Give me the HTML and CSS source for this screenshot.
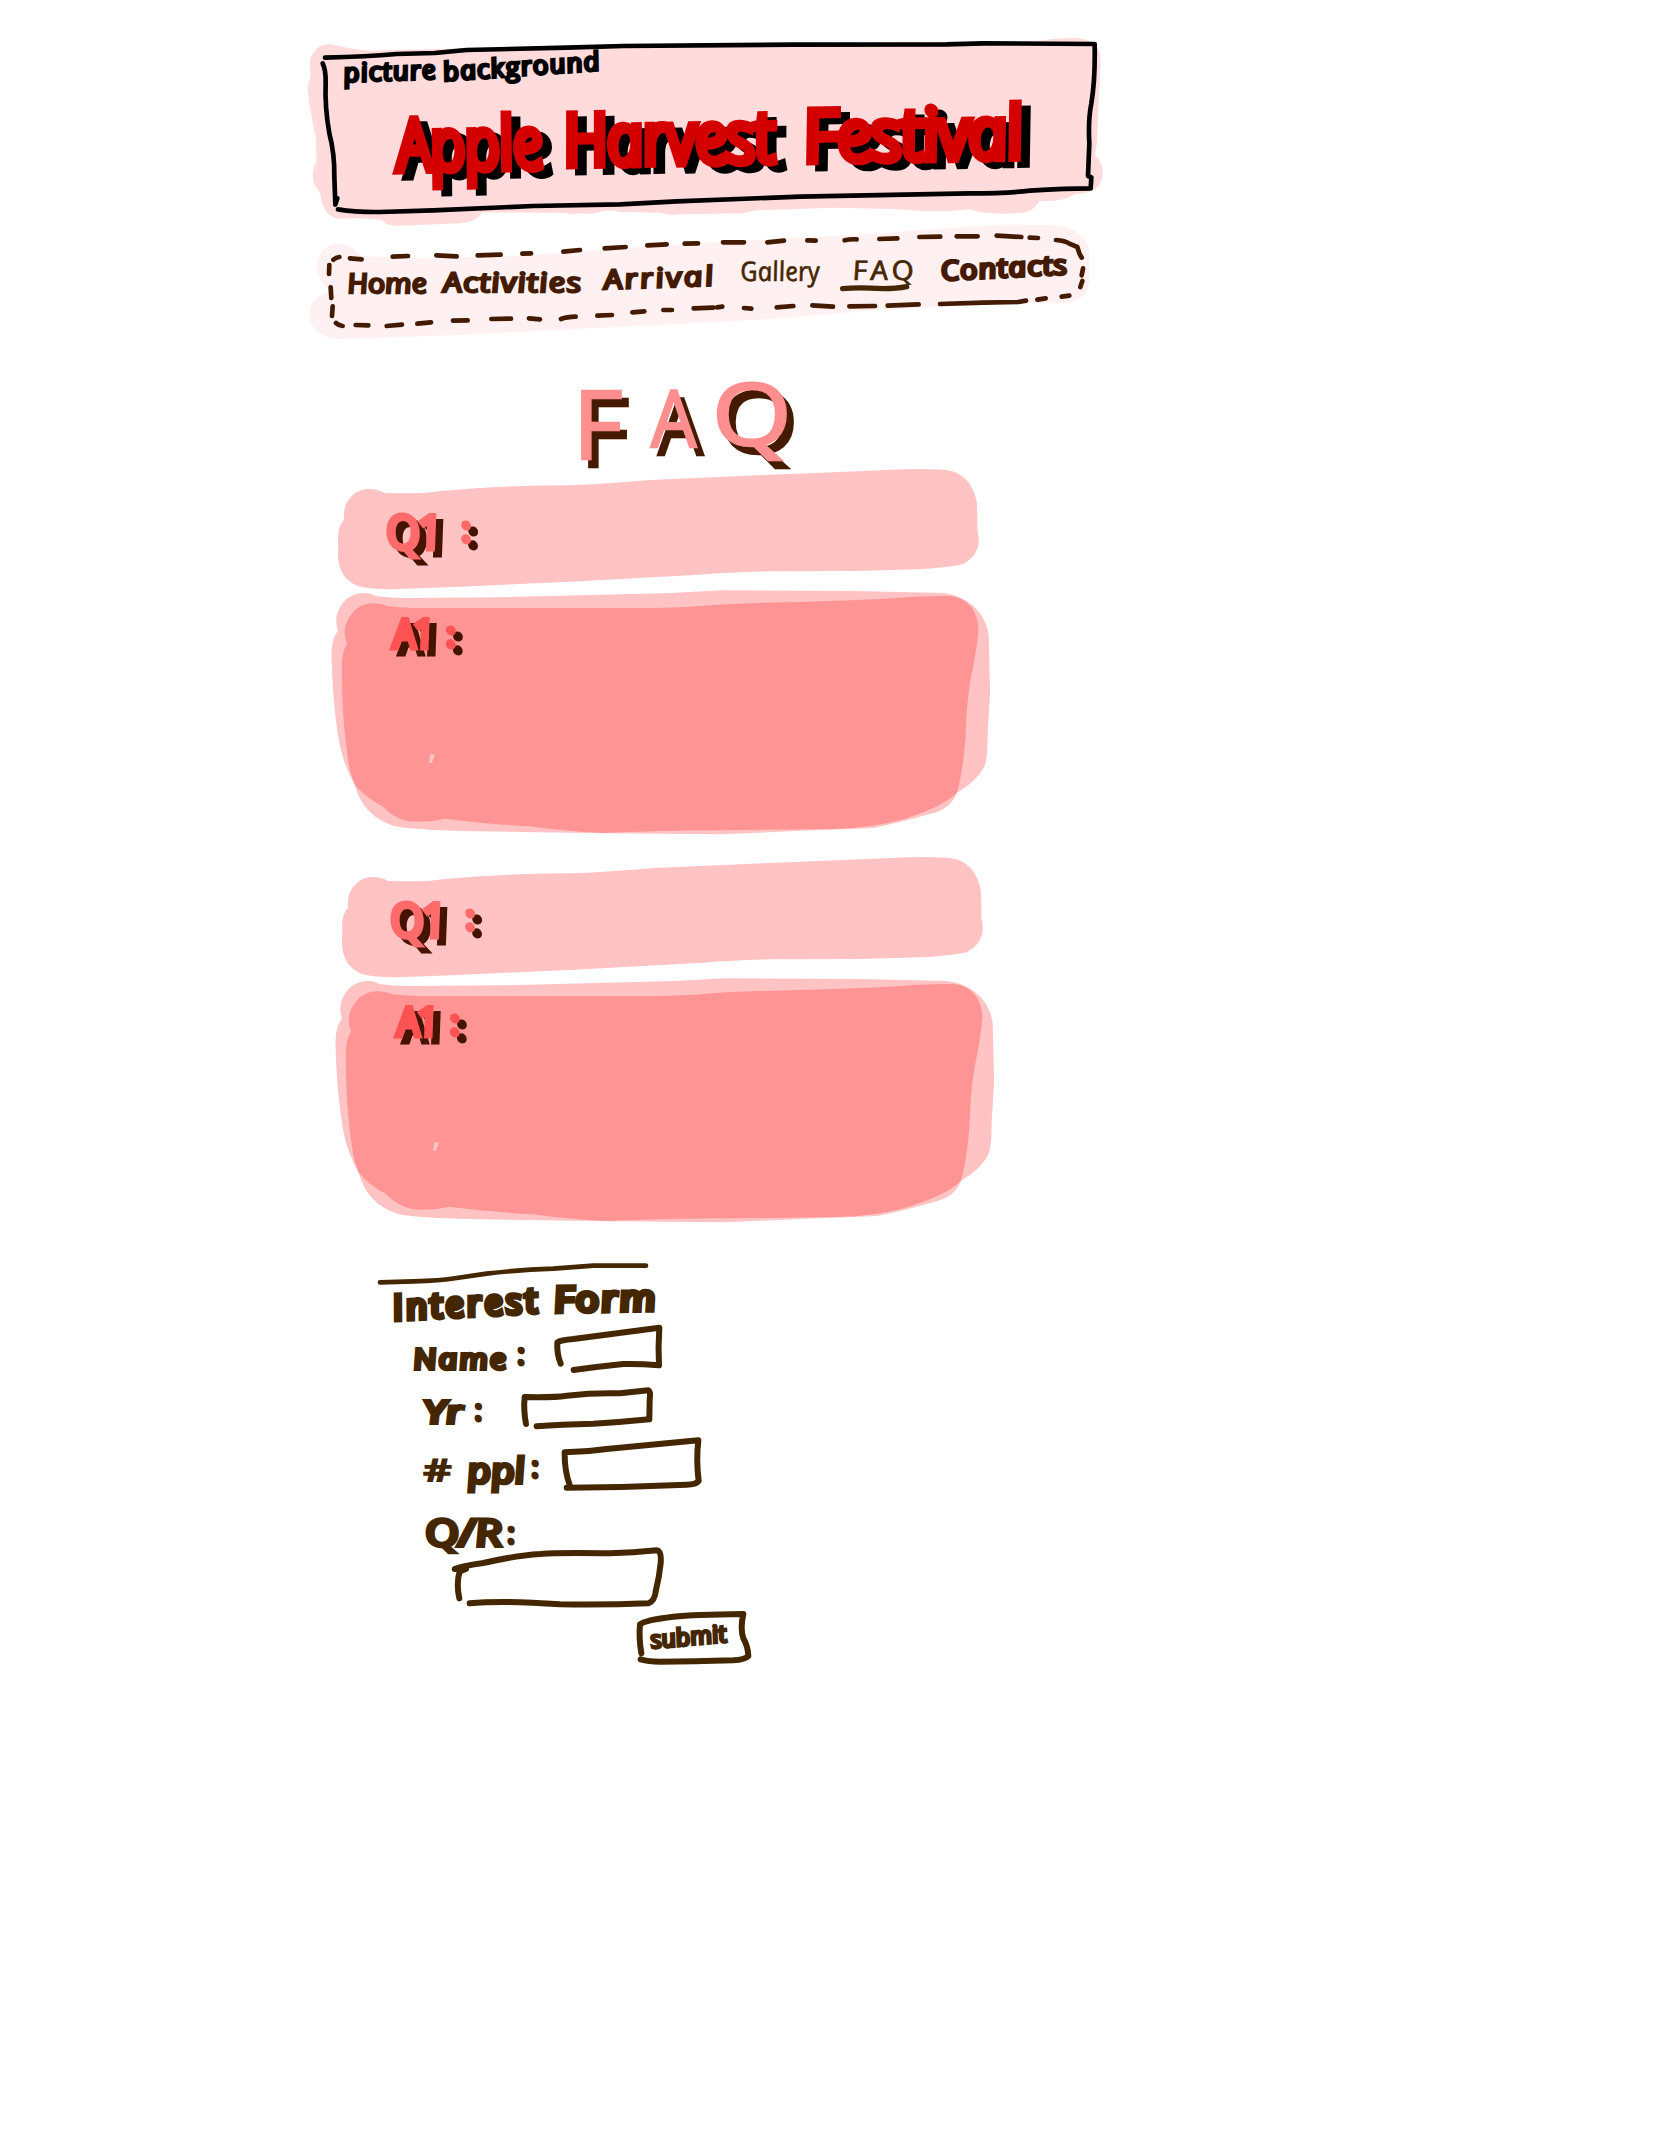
FILE: index.html
```html
<!DOCTYPE html>
<html lang="en">
<head>
<meta charset="utf-8">
<title>Apple Harvest Festival - FAQ</title>
<link rel="stylesheet" href="styles.css">
</head>
<body>
<header class="banner">
  <svg class="ink" viewBox="0 0 2520 585" aria-hidden="true">
    <path class="wash-banner" d="M90 72C50 72 25 105 30 150C38 170 22 185 23 210C28 260 36 290 40 320C50 345 48 370 50 425C38 440 35 470 42 490C50 510 62 510 64 540C72 575 95 600 130 596Q190 592 245 600C260 614 275 618 300 617L480 610C515 605 535 600 545 577L790 578Q820 584 850 580Q880 585 905 574Q935 568 960 576L1080 578Q1110 588 1140 583L1330 580Q1360 570 1400 570L1600 563L1800 568Q1900 580 2010 568C2040 582 2110 582 2150 580C2190 580 2210 560 2218 543C2260 545 2300 540 2325 522Q2370 520 2395 500C2415 470 2412 430 2385 405C2392 370 2392 340 2394 290L2402 120C2405 85 2370 52 2320 54Q2250 55 2210 64L1200 72L500 85L210 92Q150 88 90 72Z"/>
    <g class="banner-line">
      <path d="M75 113Q200 110 290 102L405 99Q450 94 500 90L800 83L970 78L1480 74L1940 73L2050 70L2384 72Q2386 180 2374 250Q2364 300 2368 370L2364 468L2374 472L2372 505Q2300 505 2190 512Q2120 520 2010 520L1500 530L1130 544L960 553L700 558L400 571L240 576Q170 577 114 568"/>
      <path d="M68 130Q78 150 77 190Q74 260 88 340Q104 400 103 470L106 554L112 535"/>
    </g>
  </svg>
  <p class="caption"><span class="hand cap-a">picture</span><span class="hand cap-b">background</span></p>
  <h1 class="title"><span class="hand t-apple">Apple</span><span class="hand t-harvest">Harvest</span><span class="hand t-festival">Festival</span></h1>
</header>

<nav class="menu">
  <svg class="ink" viewBox="0 585 2520 390" aria-hidden="true">
    <path class="wash-menu" d="M115 671C75 672 48 705 52 745C55 780 75 805 100 818C60 815 27 845 29 885C30 930 70 960 130 957L480 945L1200 908L1400 898L1700 873L1900 862L2100 850L2300 850C2345 845 2370 815 2368 770L2368 700C2365 650 2320 615 2250 615L2100 614Q2000 622 1900 627L1700 643L1420 658L1200 668L900 690L660 708L300 715L183 708Q160 673 115 671Z"/>
    <path class="dashes" d="M88 735L87 762M92 802L94 834M98 859L96 888M108 909Q116 917 128 918M100 719Q108 712 118 711M150 715L185 718M278 710L324 708M409 706L470 709M533 706L602 704M667 701L693 700M790 695L840 690M914 685L977 681M1042 676L1100 673M1154 671L1194 670M1269 667L1332 667M1402 667L1452 662M1522 661L1547 662M1634 661Q1650 657 1670 658M1738 657L1792 655M1858 651L1921 650M1970 649L2033 649M2090 647L2164 651M2189 653L2214 654M2268 660Q2295 662 2308 671L2332 681L2338 700L2345 713M2349 745L2345 766M2347 783L2341 801M2308 827L2285 830M2237 835L2212 839M2178 842L2155 846L2050 848L1920 852M1856 853L1763 857M1725 858L1648 859M1599 860L1537 856M1480 858L1430 862M1354 866L1332 864M1267 860L1251 862M1181 865L1240 863M1116 870L1090 870M1033 874L997 877M936 885L892 887M827 890Q800 891 783 897M720 898L687 895M633 896L574 897M503 901L459 902M393 907L352 911M306 914L260 918M205 916L167 915"/>
    <path class="underline" d="M1628 806Q1670 801 1750 806Q1790 806 1820 800"/>
  </svg>
  <a class="hand n-home">Home</a>
  <a class="hand n-act">Activities</a>
  <a class="hand n-arr">Arrival</a>
  <a class="hand thin n-gal">Gallery</a>
  <a class="hand thin n-faq">FAQ</a>
  <a class="hand n-con">Contacts</a>
</nav>

<main>
  <h2 class="heading"><span class="h-f">F</span><span class="h-a">A</span><span class="h-q">Q</span></h2>

  <section class="entry">
    <svg class="ink" viewBox="0 300 1568 1164" preserveAspectRatio="none" aria-hidden="true">
      <defs><g id="washes">
        <path class="wash-q" d="M142 398C120 380 85 384 70 410C55 430 52 455 54 480C42 495 39 520 41 560C37 620 50 660 85 678Q120 690 180 687L300 681L560 665L850 644Q920 636 1000 634L1200 633L1340 628Q1400 624 1440 613C1465 595 1479 565 1475 530C1470 500 1474 470 1471 425C1463 365 1435 332 1395 329Q1340 325 1270 330L1000 345L740 360Q640 372 560 376Q450 376 350 385Q290 390 240 398Q190 402 142 398Z"/>
        <path class="wash-q" d="M125 708C100 690 65 700 48 735C35 760 34 785 40 812C28 835 25 860 26 900Q30 1060 45 1160Q55 1220 78 1275C90 1335 120 1385 180 1402Q240 1412 350 1414L640 1420L900 1423L1080 1412L1240 1404Q1310 1385 1380 1357Q1415 1340 1427 1298Q1470 1265 1488 1220C1497 1190 1494 1160 1496 1110L1501 1000L1498 830C1495 770 1460 710 1395 699L1200 693L900 691Q800 700 700 702L400 712L190 714Q150 713 125 708Z"/>
        <path class="wash-a" fill-rule="evenodd" d="M150 738C130 725 95 725 75 755C55 785 50 820 61 850C48 880 49 900 49 960Q50 1080 62 1190Q68 1250 80 1278Q105 1315 138 1337Q165 1375 200 1384Q240 1389 280 1376Q380 1393 470 1399Q550 1415 640 1419Q750 1412 900 1411L1150 1407Q1230 1405 1300 1380Q1390 1345 1426 1300Q1440 1240 1446 1130Q1449 1010 1460 940Q1472 860 1475 810C1475 755 1450 712 1410 708Q1350 707 1300 713Q1200 722 1000 728Q900 732 830 740Q780 744 700 744L210 744Q180 743 150 738ZM247 1182L258 1184L250 1209L244 1208Z"/>
      </g></defs>
      <use href="#washes"/>
    </svg>
    <h3 class="question"><span class="hand q-mark">Q1</span><span class="hand q-colon">:</span></h3>
    <p class="answer"><span class="hand a-mark">A1</span><span class="hand a-colon">:</span></p>
  </section>

  <section class="entry entry-second">
    <svg class="ink" viewBox="0 300 1568 1164" preserveAspectRatio="none" aria-hidden="true"><use href="#washes"/></svg>
    <h3 class="question"><span class="hand q-mark">Q1</span><span class="hand q-colon">:</span></h3>
    <p class="answer"><span class="hand a-mark">A1</span><span class="hand a-colon">:</span></p>
  </section>

  <form class="interest">
    <svg class="rule" viewBox="0 0 1260 132" aria-hidden="true"><path d="M60 127L160 124Q240 122 290 114L380 101Q480 89 580 86L700 77L858 77"/></svg>
    <h3 class="form-title"><span class="hand f-int">Interest</span><span class="hand f-form">Form</span></h3>
    <label class="row r-name">
      <svg class="ink box" viewBox="0 252 1260 168" aria-hidden="true"><path d="M602 371Q590 340 592 307Q602 300 640 297L898 263Q894 320 897 376Q840 371 790 372Q720 379 641 390"/></svg>
      <span class="hand l-name">Name</span><span class="hand dots">:</span>
    </label>
    <label class="row r-yr">
      <svg class="ink box" viewBox="0 420 1260 162" aria-hidden="true"><path d="M498 552Q490 510 494 471Q580 473 620 467Q700 458 780 460L865 451Q873 454 869 480L868 538Q780 547 700 551Q600 553 530 559"/></svg>
      <span class="hand l-yr">Yr</span><span class="hand dots">:</span>
    </label>
    <label class="row r-ppl">
      <svg class="ink box" viewBox="0 582 1260 198" aria-hidden="true"><path d="M629 735Q613 690 614 637Q680 636 740 627L1015 601Q1008 660 1016 723Q1008 734 980 734Q800 742 620 743"/></svg>
      <span class="hand l-num">#</span><span class="hand l-ppl">ppl</span><span class="hand dots">:</span>
    </label>
    <label class="row r-qr">
      <span class="hand l-qr">Q/R</span><span class="hand dots">:</span>
    </label>
    <svg class="box area" viewBox="0 918 1260 192" aria-hidden="true"><path d="M298 1075Q288 1030 299 994L318 987L284 987Q310 977 370 969Q470 946 540 942Q600 937 750 940Q820 938 890 931Q905 933 902 970Q898 1010 888 1050Q884 1085 865 1090Q740 1095 600 1093Q430 1080 329 1090"/></svg>
    <div class="row r-submit">
      <svg class="ink box" viewBox="0 1110 1260 180" aria-hidden="true"><path d="M844 1240Q836 1195 840 1153Q855 1140 940 1130Q1000 1124 1150 1122Q1140 1165 1150 1195Q1164 1220 1165 1248Q1155 1259 1120 1261Q1000 1265 900 1265Q865 1265 842 1258"/></svg>
      <span class="hand l-submit">submit</span>
    </div>
  </form>
</main>
</body>
</html>
```

FILE: styles.css
```css
* { box-sizing: border-box; }

body {
  margin: 0;
  padding-top: 20px;
  min-height: 2154px;
  background: #fff;
  font-family: "Open Sans", "Noto Sans", sans-serif;
}

h1, h2, h3, p { margin: 0; font-weight: 400; }

/* Pen drawing that lies beneath the words of a block */
.ink {
  position: absolute;
  inset: 0;
  width: 100%;
  height: 100%;
  overflow: visible;
  z-index: -1;
}

.ink path, .rule path, .box path { stroke-linecap: round; stroke-linejoin: round; }

/* Upright italic: keeps the single-storey handwritten "a" */
.hand {
  display: block;
  flex: none;
  font-style: italic;
  line-height: 1;
  white-space: nowrap;
  transform-origin: 0 88%;
  transform: rotate(var(--tilt, 0deg)) skewX(10deg) scaleX(var(--sx, 1));
  -webkit-text-stroke: var(--pen, 2.4px) currentColor;
  stroke-linejoin: round;
}

/* Banner */
.banner { position: relative; width: 840px; height: 195px; margin-left: 300px; }
.wash-banner { fill: #ffdbdb; }
.banner-line { fill: none; stroke: #000; stroke-width: 14; }
.caption { display: flex; height: 65px; padding-left: 45px; font-size: 26px; color: #000; }
.caption .hand { --pen: 2.8px; }
.cap-a { --tilt: -2deg; --sx: 1.07; width: 100px; margin-top: 39px; letter-spacing: 1px; }
.cap-b { --tilt: -4deg; --sx: 1.07; margin-top: 38px; letter-spacing: 1px; }
.title {
  display: flex;
  padding-left: 101px;
  font-size: 70px;
  font-weight: 300;
  color: #d40000;
  filter: drop-shadow(9px 6px 0 #000);
}
.title .hand { --pen: 9px; --tilt: -1deg; }
.title .t-apple { width: 167px; margin-top: 23px; --sx: .86; }
.title .t-harvest { width: 241px; margin-top: 18px; --sx: .92; }
.title .t-festival { margin-top: 14px; --sx: .99; }

/* Menu */
.menu { position: relative; display: flex; width: 840px; height: 130px; margin-left: 300px; padding-left: 56px; font-size: 27px; color: #441a00; }
.wash-menu { fill: #fff1f1; }
.dashes { fill: none; stroke: #441a00; stroke-width: 14; }
.underline { fill: none; stroke: #442600; stroke-width: 16; }
.n-home { --sx: 1.13; width: 96px; margin-top: 54px; }
.n-act { --sx: 1.23; width: 163px; margin-top: 53px; letter-spacing: 1px; }
.n-arr { --tilt: -2deg; --sx: 1.22; width: 136px; margin-top: 50px; letter-spacing: 2px; }
.thin { --pen: .6px; color: #442600; }
.n-gal { --sx: .95; width: 112px; margin-top: 42px; }
.n-faq { --sx: 1.15; width: 92px; margin-top: 41px; letter-spacing: 3px; }
.n-con { --tilt: -3deg; --sx: 1.14; --pen: 3px; margin-top: 41px; letter-spacing: 1px; }

/* Page heading */
.heading {
  display: flex;
  height: 115px;
  padding-left: 573px;
  line-height: 1;
  color: #ff8f8f;
  -webkit-text-stroke: 2.5px currentColor;
  filter: drop-shadow(7px 8px 0 #441a00);
}
.heading span { display: block; flex: none; }
.h-f { width: 78px; margin-top: 29px; font-size: 96px; }
.h-a { width: 61px; margin-top: 33px; font-size: 78px; transform: scaleX(.92); transform-origin: 0 0; }
.h-q { margin-top: 24px; font-size: 86px; transform: scaleX(1.19); transform-origin: 0 0; }

/* Questions and answers */
.entry { position: relative; width: 700px; height: 388px; margin-left: 320px; font-size: 40px; }
.entry-second { margin-left: 324px; }
.wash-q { fill: #ffc3c3; }
.wash-a { fill: #ff9494; }
.question, .answer { display: flex; }
.question { height: 151px; padding: 48px 0 0 77px; color: #ff6b6b; filter: drop-shadow(7px 6px 0 #441400); }
.answer { padding: 2px 0 0 75px; color: #ff5252; filter: drop-shadow(7px 6px 0 #441400); }
.entry .hand { --pen: 5px; }
.q-mark { width: 77px; letter-spacing: -3px; }
.a-mark { width: 54px; letter-spacing: -3px; }
.entry .q-colon, .entry .a-colon { font-size: 32px; margin-top: 5px; }
.entry .q-colon { --pen: 6px; }
.entry .a-colon { --pen: 6px; }

/* Interest form */
.interest { width: 420px; margin: 4px 0 0 360px; color: #442600; }
.rule, .area { display: block; width: 420px; overflow: visible; }
.rule { height: 44px; }
.area { height: 64px; }
.rule path, .box path { fill: none; stroke: #442600; stroke-width: 18; }
.rule path { stroke-width: 14; }
.form-title { display: flex; height: 40px; padding-left: 35px; font-size: 35px; }
.form-title .hand { --pen: 5px; --tilt: -3deg; }
.f-int { --sx: 1.05; width: 162px; margin-top: 5px; letter-spacing: 3px; }
.form-title .f-form { --sx: 1.17; --tilt: -1deg; margin-top: -3px; letter-spacing: 2px; }
.row { position: relative; display: flex; }
.row .hand { --pen: 4px; }
.row .dots { --pen: 4px; font-size: 28px; }
.r-name { height: 56px; padding: 20px 0 0 56px; font-size: 28px; }
.l-name { --sx: 1.16; width: 105px; letter-spacing: 2px; }
.r-name .dots { margin-top: -5px; }
.r-yr { height: 54px; padding: 16px 0 0 67px; font-size: 31px; }
.l-yr { --sx: 1.38; width: 51px; }
.r-yr .dots { margin-top: -1px; }
.r-ppl { height: 66px; padding: 18px 0 0 67px; font-size: 35px; }
.row .l-num { --sx: 1.45; --pen: 2px; width: 44px; margin-top: 3px; font-size: 30px; }
.l-ppl { --sx: 1.17; width: 65px; }
.r-qr { height: 46px; padding: 13px 0 0 66px; font-size: 37px; }
.l-qr { --sx: 1.26; width: 83px; }
.r-qr .dots { margin-top: 5px; }
.r-submit { height: 60px; padding: 17px 0 0 297px; font-size: 24px; }
.row .l-submit { --tilt: -5deg; --sx: 1.04; --pen: 3px; }
```
